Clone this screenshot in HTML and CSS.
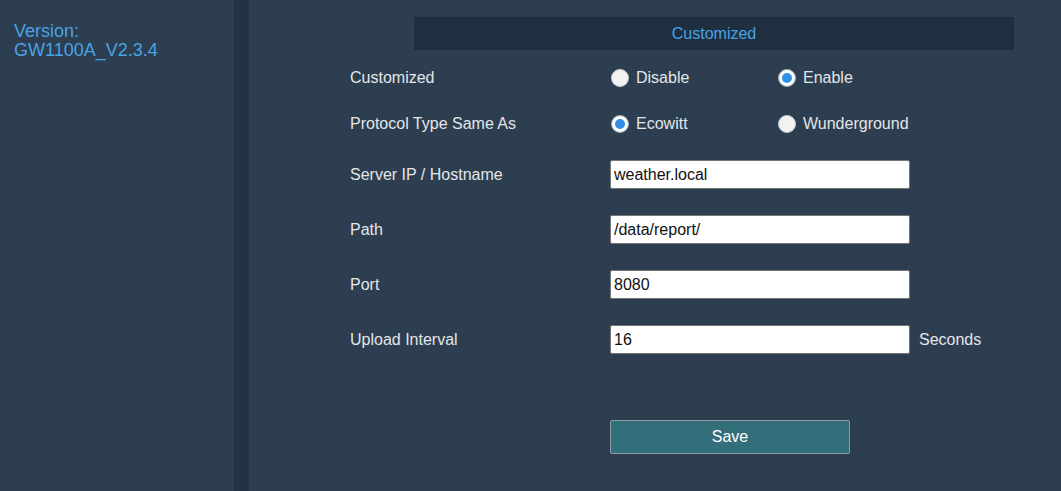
FILE: index.html
```html
<!DOCTYPE html>
<html>
<head>
<meta charset="utf-8">
<link rel="stylesheet" href="styles.css">
</head>
<body>
<div class="page">
  <aside class="sidebar">
    <div class="version">Version:<br>GW1100A_V2.3.4</div>
  </aside>
  <div class="strip"></div>
  <main class="main">
    <div class="title-bar"><span class="title">Customized</span></div>
    <div class="form">
      <div class="row radio-row">
        <div class="label">Customized</div>
        <label class="opt"><span class="radio"></span>Disable</label>
        <label class="opt"><span class="radio checked"></span>Enable</label>
      </div>
      <div class="row radio-row">
        <div class="label">Protocol Type Same As</div>
        <label class="opt"><span class="radio checked"></span>Ecowitt</label>
        <label class="opt"><span class="radio"></span>Wunderground</label>
      </div>
      <div class="row input-row">
        <div class="label">Server IP / Hostname</div>
        <input class="field" type="text" value="weather.local">
      </div>
      <div class="row input-row">
        <div class="label">Path</div>
        <input class="field" type="text" value="/data/report/">
      </div>
      <div class="row input-row">
        <div class="label">Port</div>
        <input class="field" type="text" value="8080">
      </div>
      <div class="row input-row">
        <div class="label">Upload Interval</div>
        <input class="field" type="text" value="16">
        <span class="unit">Seconds</span>
      </div>
      <div class="actions">
        <button class="save" type="button">Save</button>
      </div>
    </div>
  </main>
</div>
</body>
</html>
```

FILE: styles.css
```css
html, body {
  margin: 0;
  padding: 0;
  height: 100%;
  background: #2c3e50;
  font-family: "Liberation Sans", Arial, sans-serif;
}

.page {
  display: flex;
  height: 491px;
  background: #2c3e50;
}

.sidebar {
  width: 234px;
  flex: none;
}

.version {
  padding: 22px 0 0 14px;
  color: #4aa3e4;
  font-size: 18px;
  line-height: 19px;
}

.strip {
  width: 15px;
  flex: none;
  background: #233345;
}

.main {
  flex: 1;
  padding-top: 17px;
}

.title-bar {
  margin-left: 165px;
  width: 600px;
  height: 33px;
  background: #1f2f40;
  display: flex;
  align-items: center;
  justify-content: center;
}

.title {
  font-family: "Liberation Sans Narrow", "Arial Narrow", "Liberation Sans", sans-serif;
  font-size: 16px;
  color: #4aa3e4;
}

.form {
  margin-left: 101px;
  margin-top: 5px;
}

.row {
  display: flex;
  align-items: center;
}

.radio-row {
  height: 46px;
}

.input-row {
  height: 55px;
}

.label {
  width: 260px;
  flex: none;
  color: #e4e6e8;
  font-size: 16px;
}

.opt {
  width: 167px;
  display: flex;
  align-items: center;
  color: #e4e6e8;
  font-size: 16px;
}

.radio {
  width: 18px;
  height: 18px;
  border-radius: 50%;
  background: #f2f2f2;
  border: 1px solid #c8cdd2;
  margin: 0 7px 0 1px;
  box-sizing: border-box;
  position: relative;
  flex: none;
}

.radio.checked {
  border-color: #9aa9b8;
  background: #ffffff;
}

.radio.checked::after {
  content: "";
  position: absolute;
  left: 3px;
  top: 3px;
  width: 10px;
  height: 10px;
  border-radius: 50%;
  background: #2f8ee6;
}

.field {
  width: 300px;
  height: 29px;
  box-sizing: border-box;
  border: 1px solid #767676;
  border-radius: 2px;
  padding: 0 3px;
  font-family: "Liberation Sans", Arial, sans-serif;
  font-size: 16px;
  color: #111;
  background: #fff;
  margin: 0;
}

.unit {
  margin-left: 9px;
  color: #e4e6e8;
  font-size: 16px;
}

.actions {
  padding: 53px 0 0 260px;
}

.save {
  width: 240px;
  height: 34px;
  background: #336f7a;
  color: #fff;
  border: 1px solid #8d9aa6;
  border-radius: 2px;
  font-family: "Liberation Sans", Arial, sans-serif;
  font-size: 16px;
  margin: 0;
  padding: 0;
}
```
